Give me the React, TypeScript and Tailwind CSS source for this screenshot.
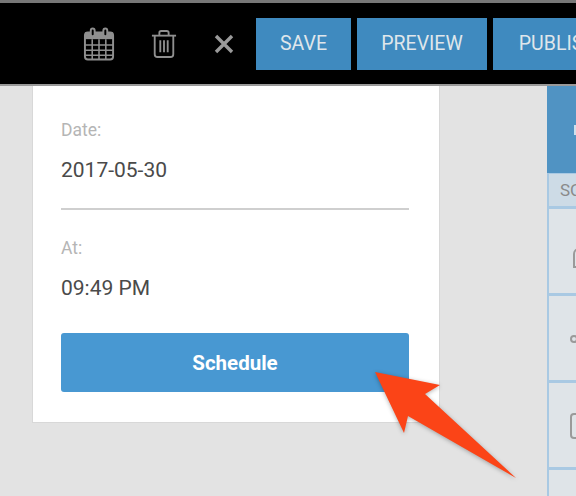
import React from "react";

function CalendarIcon() {
  return (
    <svg width="34" height="36" viewBox="0 0 34 36" fill="none" stroke="#8f8f8f" strokeWidth="2">
      <rect x="2" y="6" width="29" height="28" rx="3" />
      <rect x="2" y="6" width="29" height="7" fill="#8f8f8f" stroke="none" />
      <path d="M2 19h29M2 24.500h29M2 29.500h29M9.500 13v21M16.500 13v21M23.500 13v21" strokeWidth="1.600" />
      <rect x="8" y="2" width="4" height="8" rx="2" fill="#000" />
      <rect x="21" y="2" width="4" height="8" rx="2" fill="#000" />
    </svg>
  );
}

function TrashIcon() {
  return (
    <svg width="28" height="32" viewBox="0 0 28 32" fill="none" stroke="#8f8f8f" strokeWidth="2">
      <path d="M1 7h26" />
      <path d="M9 7V4a2 2 0 0 1 2-2h6a2 2 0 0 1 2 2v3" />
      <path d="M4 7v20a3 3 0 0 0 3 3h14a3 3 0 0 0 3-3V7" />
      <path d="M10 12v13M14 12v13M18 12v13" />
    </svg>
  );
}

function CloseIcon() {
  return (
    <svg width="20" height="20" viewBox="0 0 20 20" fill="none" stroke="#9a9a9a" strokeWidth="3.400">
      <path d="M2 2l16 16M18 2L2 18" />
    </svg>
  );
}

function Arrow() {
  return (
    <svg className="absolute left-[370px] top-[368px]" width="150" height="115" viewBox="0 0 150 115" style={{ filter: "drop-shadow(0 1px 2px rgba(0,0,0,0.3))" }}>
      <path d="M5 4 L70 17 L55 26 L146 110 L38 48 L34 65 Z" fill="#fb4417" />
    </svg>
  );
}

const TopButton = ({ label, width }: { label: string; width: string }) => (
  <div className={`${width} h-[52px] shrink-0 bg-[#3f8abf] flex items-center justify-center text-[19.500px] text-[#dfe6eb]`}>{label}</div>
);

export default function App() {
  return (
    <div className="relative w-[576px] h-[496px] overflow-hidden bg-[#e3e3e3] font-['Roboto',sans-serif]">
      <header className="h-[86px] bg-black border-t-[3px] border-b-2 border-t-[#777] border-b-[#999] flex items-center">
        <div className="w-[83px] shrink-0" />
        <div className="w-[33px] shrink-0 flex justify-center"><CalendarIcon /></div>
        <div className="w-[35px] shrink-0" />
        <div className="w-[26px] shrink-0 flex justify-center"><TrashIcon /></div>
        <div className="w-[37px] shrink-0" />
        <div className="w-[20px] shrink-0 flex justify-center"><CloseIcon /></div>
        <div className="w-[22px] shrink-0" />
        <div className="flex gap-[6px]">
          <TopButton label="SAVE" width="w-[95px]" />
          <TopButton label="PREVIEW" width="w-[130px]" />
          <TopButton label="PUBLISH" width="w-[130px]" />
        </div>
      </header>
      <main className="flex h-[410px]">
        <div className="ml-[32px] w-[408px] h-[337px] bg-white border-l border-r border-b border-[#d8d8d8] pl-[28px] pr-[30px] pt-[34px]">
          <div className="text-[17.500px] leading-[20px] text-[#b5b5b5]">Date:</div>
          <div className="mt-[17px] text-[21px] leading-[26px] text-[#4a4a4a]">2017-05-30</div>
          <div className="mt-[25px] h-[2px] bg-[#cfcfcf]" />
          <div className="mt-[28px] text-[17.500px] leading-[20px] text-[#b5b5b5]">At:</div>
          <div className="mt-[17px] text-[21px] leading-[26px] text-[#4a4a4a]">09:49 PM</div>
          <button className="mt-[32px] w-full h-[59px] rounded-[3px] bg-[#4898d2] text-white font-bold text-[20.500px] pt-[1px]">Schedule</button>
        </div>
        <aside className="ml-[107px] w-[29px] shrink-0 flex flex-col border-l-2 border-[#a9c9e3] bg-[#dfe4e8]">
          <div className="h-[87px] -ml-[2px] bg-[#5093c3] flex items-center pl-[27px]"><span className="w-[3px] h-[10px] bg-[#cfe0ec]" /></div>
          <div className="h-[36px] bg-[#cddbe6] border-b-[3px] border-t border-[#a9c9e3] text-[17px] leading-[32px] pl-[11px] text-[#8a8a8a] overflow-hidden">SOCIAL</div>
          <div className="h-[87px] border-b-[3px] border-[#a9c9e3] overflow-hidden pt-[39px] pl-[24px]"><span className="block w-[12px] h-[20px] border-2 border-[#9a9a9a] rounded-t-full" /></div>
          <div className="h-[87px] border-b-[3px] border-[#a9c9e3] overflow-hidden pt-[39px] pl-[21px]"><span className="block w-[8px] h-[8px] border-2 border-[#9a9a9a] rounded-full" /></div>
          <div className="h-[87px] border-b-[3px] border-[#a9c9e3] overflow-hidden pt-[30px] pl-[21px]"><span className="block w-[16px] h-[26px] border-2 border-[#9a9a9a] rounded" /></div>
        </aside>
      </main>
      <Arrow />
    </div>
  );
}
